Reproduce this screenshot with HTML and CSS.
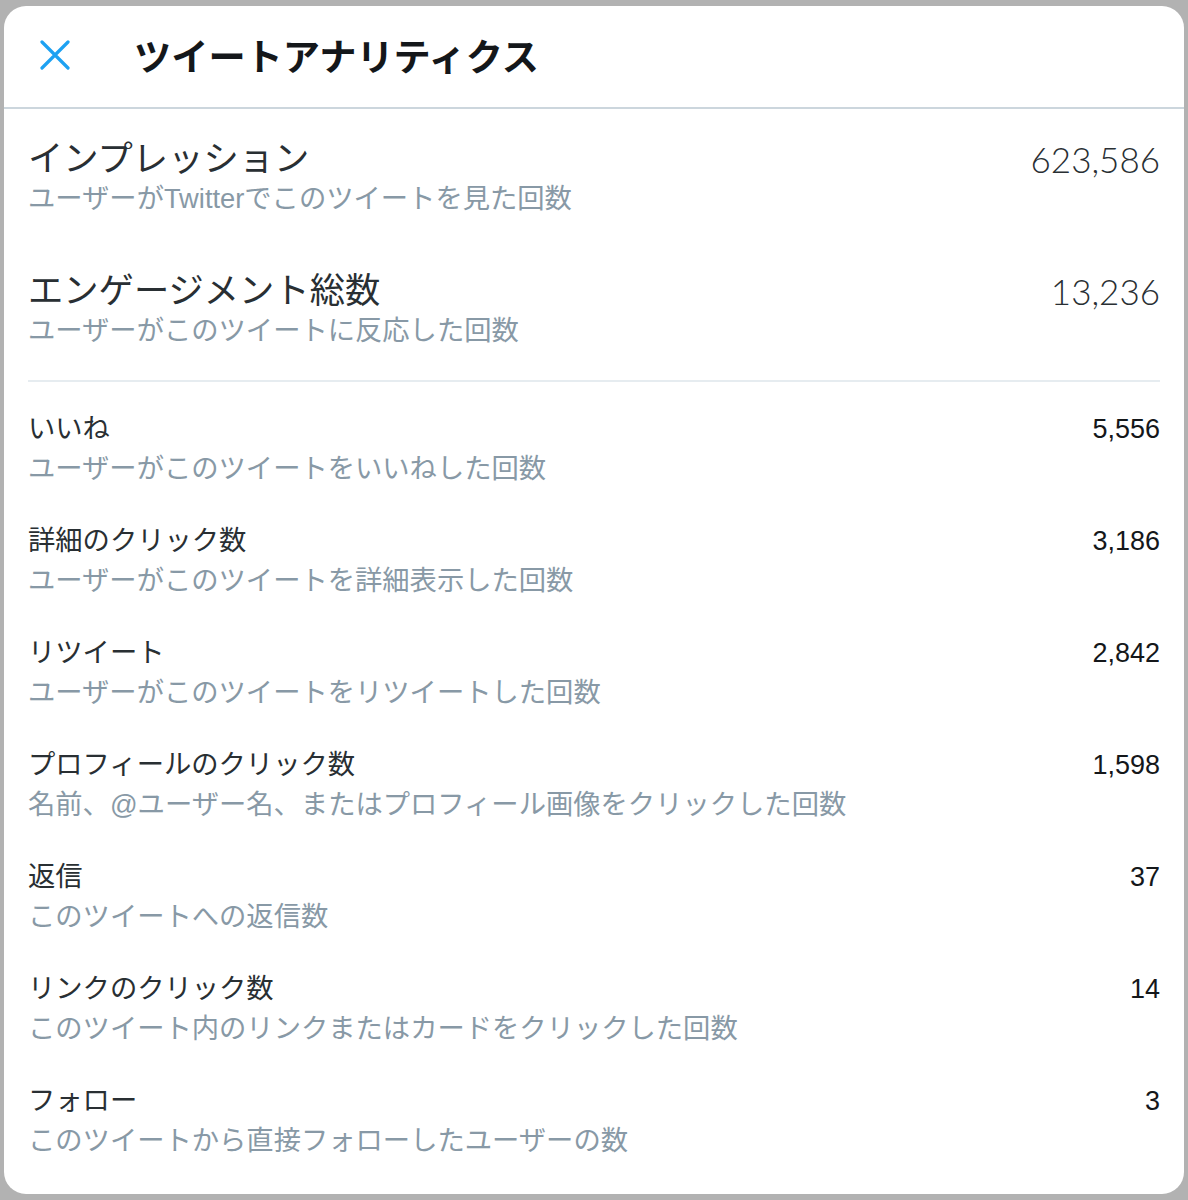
FILE: index.html
```html
<!DOCTYPE html>
<html lang="ja">
<head>
  <meta charset="UTF-8" />
  <title>ツイートアナリティクス</title>
  <link rel="stylesheet" href="styles.css">
</head>
<body>
  <div class="modal" role="dialog" aria-label="ツイートアナリティクス">
    <div class="modal-header">
      <button class="close-btn" aria-label="閉じる">
        <svg viewBox="0 0 30 30" width="30" height="30">
          <path d="M2 2 L28 28 M28 2 L2 28" stroke="#1da1f2" stroke-width="3.2" stroke-linecap="round" fill="none" />
        </svg>
      </button>
      <h1>ツイートアナリティクス</h1>
    </div>

    <div class="modal-body">
      <div class="stat stat-big">
        <div class="stat-text">
          <div class="stat-label">インプレッション</div>
          <div class="stat-desc">ユーザーがTwitterでこのツイートを見た回数</div>
        </div>
        <div class="stat-value">623,586</div>
      </div>
      <div class="stat stat-big">
        <div class="stat-text">
          <div class="stat-label">エンゲージメント総数</div>
          <div class="stat-desc">ユーザーがこのツイートに反応した回数</div>
        </div>
        <div class="stat-value">13,236</div>
      </div>

      <hr class="divider">

      <div class="stat">
        <div class="stat-text">
          <div class="stat-label">いいね</div>
          <div class="stat-desc">ユーザーがこのツイートをいいねした回数</div>
        </div>
        <div class="stat-value">5,556</div>
      </div>
      <div class="stat">
        <div class="stat-text">
          <div class="stat-label">詳細のクリック数</div>
          <div class="stat-desc">ユーザーがこのツイートを詳細表示した回数</div>
        </div>
        <div class="stat-value">3,186</div>
      </div>
      <div class="stat">
        <div class="stat-text">
          <div class="stat-label">リツイート</div>
          <div class="stat-desc">ユーザーがこのツイートをリツイートした回数</div>
        </div>
        <div class="stat-value">2,842</div>
      </div>
      <div class="stat">
        <div class="stat-text">
          <div class="stat-label">プロフィールのクリック数</div>
          <div class="stat-desc">名前、@ユーザー名、またはプロフィール画像をクリックした回数</div>
        </div>
        <div class="stat-value">1,598</div>
      </div>
      <div class="stat">
        <div class="stat-text">
          <div class="stat-label">返信</div>
          <div class="stat-desc">このツイートへの返信数</div>
        </div>
        <div class="stat-value">37</div>
      </div>
      <div class="stat">
        <div class="stat-text">
          <div class="stat-label">リンクのクリック数</div>
          <div class="stat-desc">このツイート内のリンクまたはカードをクリックした回数</div>
        </div>
        <div class="stat-value">14</div>
      </div>
      <div class="stat">
        <div class="stat-text">
          <div class="stat-label">フォロー</div>
          <div class="stat-desc">このツイートから直接フォローしたユーザーの数</div>
        </div>
        <div class="stat-value">3</div>
      </div>
    </div>
  </div>
</body>
</html>
```

FILE: styles.css
```css
*, *::before, *::after { box-sizing: border-box; }
html, body {
  margin: 0;
  height: 100%;
}
body {
  background: #b2b2b2;
  padding: 6px 4px;
  font-family: "Liberation Sans", "Noto Sans CJK JP", sans-serif;
  color: #14171a;
}
.modal {
  background: #fff;
  border-radius: 22px;
  height: 1188px;
  overflow: hidden;
}
.modal-header {
  display: flex;
  align-items: center;
  height: 103px;
  padding: 0 0 4px 36px;
  border-bottom: 2px solid #ccd6dd;
}
.close-btn {
  display: flex;
  align-items: center;
  justify-content: center;
  width: 30px;
  height: 30px;
  padding: 0;
  margin: 0 64px 0 0;
  border: none;
  background: none;
  cursor: pointer;
}
.modal-header h1 {
  margin: 0;
  font-family: "Noto Sans CJK JP", sans-serif;
  font-size: 37.2px;
  font-weight: 700;
  line-height: 44px;
  color: #14171a;
}
.modal-body {
  padding: 30px 24px 0 24px;
}
.stat {
  display: flex;
  justify-content: space-between;
  align-items: flex-start;
  margin-bottom: 32px;
}
.stat-label {
  font-size: 27.3px;
  line-height: 40px;
  color: #292f33;
}
.stat-desc {
  font-size: 27.3px;
  line-height: 40px;
  color: #8899a6;
}
.stat-value {
  font-size: 27px;
  line-height: 40px;
  color: #14171a;
  white-space: nowrap;
}
.stat-big {
  margin-bottom: 52px;
}
.stat-big .stat-label {
  font-size: 35.3px;
}
.stat-big .stat-value {
  font-family: "Lato", "Liberation Sans", sans-serif;
  font-weight: 300;
  font-size: 35px;
  color: #292f33;
}
.stat-big:nth-of-type(2) {
  margin-bottom: 0;
}
.divider {
  border: none;
  border-top: 2px solid #e6ecf0;
  margin: 29px 0 27px 0;
}
```
